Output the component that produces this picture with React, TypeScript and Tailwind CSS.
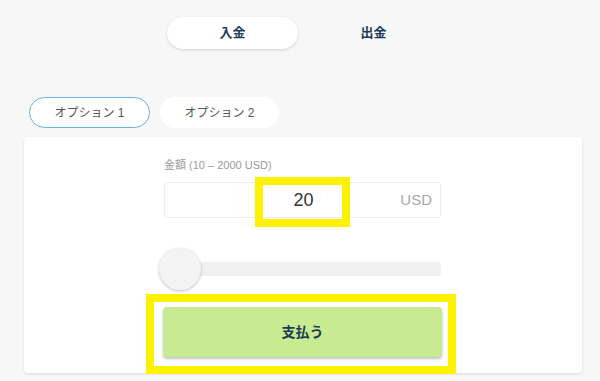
import React from "react";

export default function App() {
  return (
    <div
      className="w-[600px] h-[381px] bg-[#f7f7f7] overflow-hidden"
      style={{ fontFamily: '"Liberation Sans", "Noto Sans CJK JP", sans-serif' }}
    >
      {/* top tabs */}
      <div className="flex justify-center gap-[10px] pt-[17px] pl-[6px]">
        <div className="w-[131px] h-[32px] rounded-full bg-white shadow-[0_1px_3px_rgba(0,0,0,0.15)] flex items-center justify-center text-[13px] font-bold text-[#1c3b58]">
          入金
        </div>
        <div className="w-[131px] h-[32px] rounded-full flex items-center justify-center text-[13px] font-bold text-[#1c3b58]">
          出金
        </div>
      </div>

      {/* option pills */}
      <div className="flex gap-[10px] pl-[29px] mt-[48px]">
        <div className="w-[121px] h-[31px] rounded-full bg-white border border-[#6cb2de] flex items-center justify-center text-[12px] text-[#555]">
          オプション 1
        </div>
        <div className="w-[119px] h-[31px] rounded-full bg-white flex items-center justify-center text-[12px] text-[#555]">
          オプション 2
        </div>
      </div>

      {/* card */}
      <div className="relative ml-[24px] mt-[9px] w-[558px] h-[236px] bg-white rounded-[4px] shadow-[0_1px_3px_rgba(0,0,0,0.12)]">
        <div className="ml-[140px] w-[277px] pt-[21px]">
          <div className="text-[11px] leading-[14px] text-[#9a9a9a]">金額 (10 – 2000 USD)</div>
          <div className="relative mt-[10px] h-[36px] border border-[#eeeeee] rounded-[3px] flex items-center justify-center">
            <span className="text-[18px] text-[#333] pl-[2px]">20</span>
            <span className="absolute right-[8px] top-1/2 -translate-y-1/2 text-[15px] text-[#a8a8a8]">USD</span>
          </div>
          <div className="relative mt-[44px] h-[14px] rounded-[4px] bg-[#f1f1f1]">
            <div className="absolute left-[-5px] top-[-14px] w-[42px] h-[42px] rounded-full bg-[#f3f3f3] shadow-[0_1px_3px_rgba(0,0,0,0.25)]" />
          </div>
          <div className="-ml-[1px] mt-[31px] w-[279px] h-[50px] rounded-[4px] bg-[#c8eb91] shadow-[0_2px_3px_rgba(0,0,0,0.25)] flex items-center justify-center text-[14px] font-bold text-[#1c3b58]">
            支払う
          </div>
        </div>

        {/* highlight overlays */}
        <div className="absolute left-[231px] top-[40px] w-[95px] h-[50px] border-[8px] border-[#fff200] pointer-events-none" />
        <div className="absolute left-[122px] top-[157px] w-[310px] h-[80px] border-[8px] border-[#fff200] pointer-events-none" />
      </div>
    </div>
  );
}
